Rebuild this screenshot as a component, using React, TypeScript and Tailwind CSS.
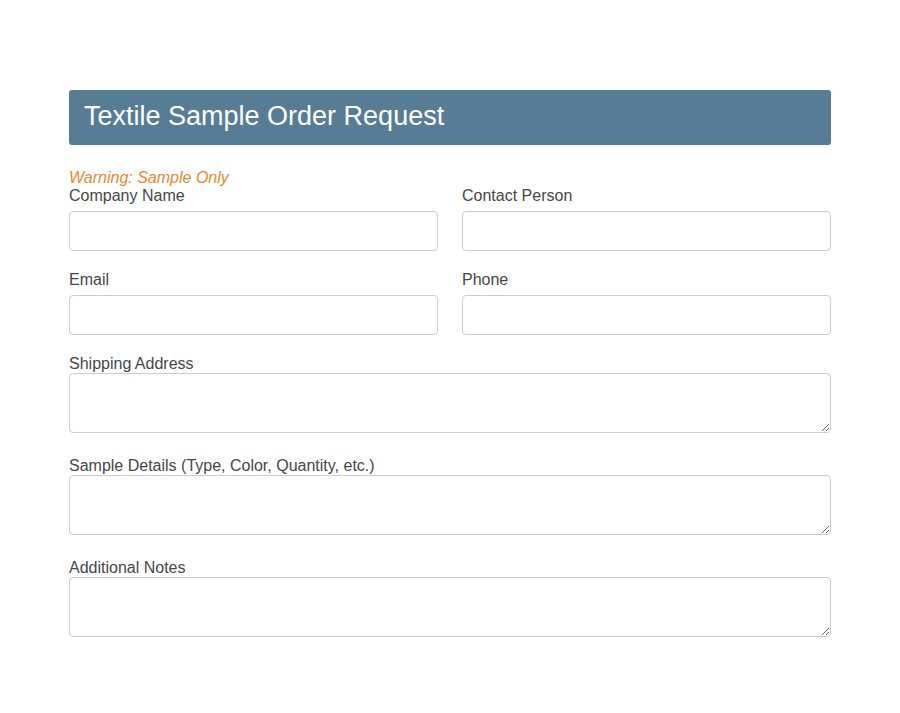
export default function App() {
  const field = "block w-full h-10 rounded border border-[#cccccc] bg-white px-2";
  const area = "block w-full h-[60px] rounded border border-[#cccccc] bg-white px-2 resize-y";
  const label = "block text-base leading-[18px] text-[#474747]";

  return (
    <div className="min-h-screen bg-white font-['Liberation_Sans',Arial,sans-serif]">
      <div className="mx-auto w-[762px] pt-[90px]">
        <div className="flex h-[55px] items-center rounded-[3px] bg-[#577c96] px-[15px] pb-[3px]">
          <h1 className="text-[27px] leading-none text-white">Textile Sample Order Request</h1>
        </div>

        <form className="mt-[24px]">
          <p className="text-base italic leading-[18px] text-[#e8892f]">Warning: Sample Only</p>

          <div className="grid grid-cols-2 gap-x-6 gap-y-5">
            <div>
              <label className={`${label} mb-[6px]`}>Company Name</label>
              <input type="text" className={field} />
            </div>
            <div>
              <label className={`${label} mb-[6px]`}>Contact Person</label>
              <input type="text" className={field} />
            </div>
            <div>
              <label className={`${label} mb-[6px]`}>Email</label>
              <input type="email" className={field} />
            </div>
            <div>
              <label className={`${label} mb-[6px]`}>Phone</label>
              <input type="tel" className={field} />
            </div>
          </div>

          <div className="mt-5">
            <label className={label}>Shipping Address</label>
            <textarea className={area} />
          </div>
          <div className="mt-6">
            <label className={label}>Sample Details (Type, Color, Quantity, etc.)</label>
            <textarea className={area} />
          </div>
          <div className="mt-6">
            <label className={label}>Additional Notes</label>
            <textarea className={area} />
          </div>
        </form>
      </div>
    </div>
  );
}
